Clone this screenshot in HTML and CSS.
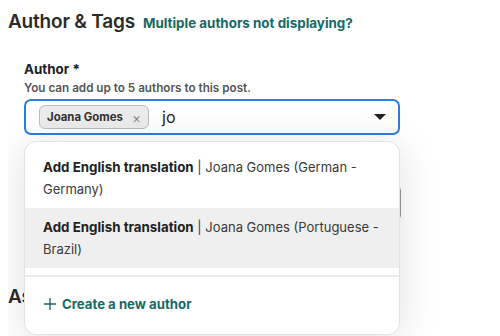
FILE: index.html
```html
<!DOCTYPE html>
<html lang="en">
<head>
  <meta charset="UTF-8">
  <title>Author &amp; Tags</title>
  <link rel="stylesheet" href="styles.css">
</head>
<body>
  <div class="section-head">
    <h2>Author &amp; Tags</h2>
    <a href="#" class="help-link">Multiple authors not displaying?</a>
  </div>

  <div class="field">
    <div class="label">Author *</div>
    <div class="hint">You can add up to 5 authors to this post.</div>
    <div class="picker">
      <div class="select">
        <span class="chip">Joana Gomes <span class="chip-x">&times;</span></span>
        <span class="query">jo</span>
        <span class="caret"></span>
      </div>

      <div class="menu">
        <div class="option">
          <b>Add English translation</b> | Joana Gomes (German - Germany)
        </div>
        <div class="option active">
          <b>Add English translation</b> | Joana Gomes (Portuguese - Brazil)
        </div>
        <div class="menu-sep"></div>
        <div class="create">
          <svg width="14" height="14" viewBox="0 0 14 14"><path d="M7 1v12M1 7h12" stroke="#176a64" stroke-width="1.4" fill="none"/></svg>
          Create a new author
        </div>
      </div>
    </div>
  </div>

  <div class="field">
    <div class="label">Tags</div>
    <div class="select plain"></div>
  </div>

  <div class="section-head lower">
    <h2>Assignment</h2>
  </div>
  <div class="field">
    <div class="label">Variant type</div>
  </div>
</body>
</html>
```

FILE: styles.css
```css
body {
  margin: 8px;
  background: #fff;
  color: #222;
  font-family: Inter, "Noto Sans", sans-serif;
}

.section-head {
  display: flex;
  align-items: baseline;
  gap: 8px;
  margin-top: 2px;
}

.section-head h2 {
  margin: 0;
  font-size: 19px;
  font-weight: 600;
  color: #2a2a2a;
  letter-spacing: -0.2px;
}

.help-link {
  font-size: 13.4px;
  font-weight: 700;
  color: #176a64;
  text-decoration: none;
}

.field {
  padding-left: 16px;
  margin-top: 28px;
}

.label {
  font-size: 13.4px;
  font-weight: 700;
  color: #222;
}

.hint {
  font-size: 11.7px;
  font-weight: 600;
  color: #555;
  margin-top: 4px;
}

.picker {
  position: relative;
  width: 376px;
  margin-top: 4px;
}

.select {
  display: flex;
  align-items: center;
  gap: 13px;
  height: 36px;
  box-sizing: border-box;
  border: 2px solid #2f7ce0;
  border-radius: 7px;
  padding: 0 12px 0 13px;
}

.select.plain {
  width: 377px;
  border: 1px solid #999;
  border-radius: 6px;
  margin-top: 6px;
}

.chip {
  display: inline-flex;
  align-items: center;
  gap: 9px;
  height: 22px;
  padding: 0 7px;
  background: #ececec;
  border: 1px solid #bcbcbc;
  border-radius: 6px;
  font-size: 11.4px;
  font-weight: 700;
  color: #333;
}

.chip-x {
  font-weight: 300;
  font-size: 14px;
  color: #777;
}

.query {
  font-size: 16px;
  flex: 1;
}

.caret {
  width: 0;
  height: 0;
  border-left: 6px solid transparent;
  border-right: 6px solid transparent;
  border-top: 6px solid #222;
}

.menu {
  position: absolute;
  left: 0;
  top: 42px;
  width: 374px;
  background: #fff;
  border: 1px solid #e2e2e2;
  border-radius: 12px;
  box-shadow: 0 4px 40px rgba(0, 0, 0, 0.12);
  padding-top: 6px;
  overflow: hidden;
  z-index: 2;
}

.option {
  padding: 8px 14px 8px 18px;
  font-size: 13px;
  line-height: 22px;
  color: #3a3a3a;
}

.option b {
  font-size: 13.35px;
  color: #222;
}

.option.active {
  background: #efefef;
}

.menu-sep {
  height: 2px;
  background: #ececec;
  margin-top: 7px;
}

.create {
  display: flex;
  align-items: center;
  gap: 5px;
  padding: 16px 18px 19px;
  line-height: 22px;
  font-size: 13.2px;
  font-weight: 700;
  color: #176a64;
}

.section-head.lower {
  margin-top: 64px;
}
```
